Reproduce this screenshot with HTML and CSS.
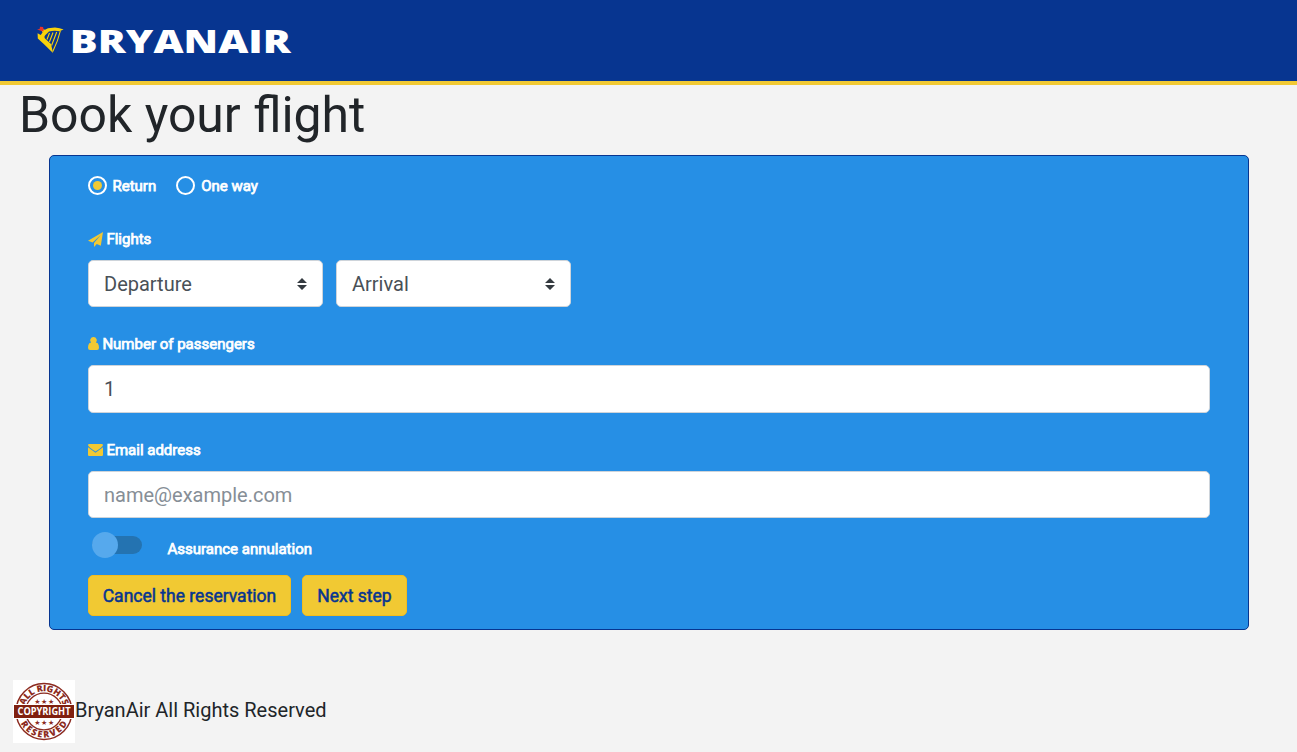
FILE: index.html
```html
<!DOCTYPE html>
<html lang="en">
<head>
<meta charset="utf-8">
<title>BryanAir</title>
<link rel="stylesheet" href="styles.css">
</head>
<body>
<header class="header">
  <svg class="logo" width="270" height="60" viewBox="36 12 270 60" role="img" aria-label="BRYANAIR">
    <path fill="#f8d20a" d="M40.5 28.5 45 29.8 48 28.3 55 27.5Q60 28.2 63.6 29.4L59.5 31.2Q54 30 49 31.6L46 34.5Q43.5 36.5 45 38.5L51 44 53 53 44.3 44.4 37.8 38.6 37.6 33.3 40.7 35 42.5 32.6Z"/>
    <path fill="none" stroke="#f8d20a" stroke-width="1.1" d="M60.3 31Q58 41 52.8 51.5M49.5 33 47 39.5M53 32.5 49.4 42M56.7 32 51.6 45.5"/>
    <path fill="#e8332b" d="M37 29.6 39.6 28.9 40 26.7 43 27 43.7 29.5 43.3 31.5 40 30.6Z"/>
    <text class="logo-text" x="69.8" y="53" textLength="221" lengthAdjust="spacingAndGlyphs">BRYANAIR</text>
  </svg>
</header>
<h1 class="title">Book your flight</h1>
<main class="panel">
  <div class="trip">
    <label class="radio"><span class="ring checked"></span><span class="label">Return</span></label>
    <label class="radio"><span class="ring"></span><span class="label">One way</span></label>
  </div>
  <div class="caption c-flights">
    <svg width="15" height="15" viewBox="0 0 15 15"><path fill="#f1c933" d="M15 0 12.8 13.7 8.8 12 6 15V10.9L12.8 3 4.6 10.4 0 8.7Z"/></svg>
    <span class="label">Flights</span>
  </div>
  <div class="selects">
    <div class="field select"><span>Departure</span><svg width="10" height="12" viewBox="0 0 10 12"><path fill="#343a40" d="M0 5 5 0 10 5ZM0 7H10L5 12Z"/></svg></div>
    <div class="field select"><span>Arrival</span><svg width="10" height="12" viewBox="0 0 10 12"><path fill="#343a40" d="M0 5 5 0 10 5ZM0 7H10L5 12Z"/></svg></div>
  </div>
  <div class="caption c-passengers">
    <svg width="11" height="13" viewBox="0 0 11 13"><path fill="#f1c933" d="M5.5 0A3.2 3.2 0 0 1 7.9 5.4Q10.2 5.4 10.7 8.2L11 10.8Q11 13 9 13H2Q0 13 0 10.8L.3 8.2Q.8 5.4 3.1 5.4A3.2 3.2 0 0 1 5.5 0Z"/></svg>
    <span class="label">Number of passengers</span>
  </div>
  <div class="field tall">1</div>
  <div class="caption c-email">
    <svg width="15" height="12" viewBox="0 0 15 12"><path fill="#f1c933" d="M0 1.2Q0 0 1.2 0H13.8Q15 0 15 1.2 14.5 2.8 7.5 7.6 .5 2.8 0 1.2ZM0 3.2 7.5 8.8 15 3.2V11Q15 12 13.8 12H1.2Q0 12 0 11Z"/></svg>
    <span class="label">Email address</span>
  </div>
  <div class="field placeholder">name@example.com</div>
  <div class="insurance"><span class="track"><span class="thumb"></span></span><span class="label">Assurance annulation</span></div>
  <div class="actions"><button class="btn cancel">Cancel the reservation</button><button class="btn next">Next step</button></div>
</main>
<footer class="footer">
  <svg width="62" height="63" viewBox="0 0 62 63">
    <defs><path id="up" d="M10.9 31.5A20.1 20.1 0 0 1 51.1 31.5"/><path id="down" d="M4.9 31.5A26.1 26.1 0 0 0 57.1 31.5"/></defs>
    <path fill="#fff" d="M0 0H62V63H0Z"/>
    <g fill="none" stroke="#8c2b20"><circle cx="31" cy="31.5" r="27.9" stroke-width="1.5"/><circle cx="31" cy="31.5" r="18.3" stroke-width="1.3"/></g>
    <g class="stamp-arc"><text><textPath href="#up" startOffset="50%" textLength="51">ALL RIGHTS</textPath></text><text><textPath href="#down" startOffset="50%" textLength="57">RESERVED</textPath></text></g>
    <text class="stars" x="31.5" y="24">★★★</text><text class="stars" x="31.5" y="45">★★★</text>
    <path fill="#fff" d="M1 24H61V39H1Z"/><path fill="#80200f" d="M1 25H61V38H1Z"/>
    <text class="stamp-text" x="31" y="35.2" textLength="53" lengthAdjust="spacingAndGlyphs">COPYRIGHT</text>
  </svg>
  <span>BryanAir All Rights Reserved</span>
</footer>
</body>
</html>
```

FILE: styles.css
```css
* { box-sizing: border-box; }
body { margin: 0; height: 752px; overflow: hidden; background: #f3f3f3; color: #212529; font-family: Roboto, sans-serif; font-size: 20px; }
svg { display: block; flex: none; }
.header { height: 85px; background: #073590; border-bottom: 4px solid #f1c933; padding: 12px 0 0 36px; }
.logo-text { font: 800 32.5px "Open Sans", sans-serif; fill: #fff; }
.title { margin: 0 0 10px 19px; height: 60px; font-size: 49.9px; font-weight: 400; line-height: 60px; white-space: nowrap; }
.panel { width: 1200px; height: 475px; margin-left: 49px; padding: 20px 38px 0; background: #268fe5; border: 1px solid #073590; border-radius: 5px; }
.label { color: #fff; font-size: 15px; line-height: 20px; white-space: nowrap; -webkit-text-stroke: .75px #fff; }
.trip { display: flex; height: 20px; gap: 19.5px; }
.radio { display: flex; align-items: flex-start; gap: 5.5px; }
.ring { display: flex; width: 19px; height: 19px; border: 2px solid #fff; border-radius: 50%; align-items: center; justify-content: center; }
.checked::after { content: ""; width: 9px; height: 9px; border-radius: 50%; background: #f1c933; }
.radio + .radio { gap: 6.5px; }
.caption { display: flex; align-items: center; height: 20px; gap: 3.4px; }
.c-flights { margin: 33px 0 11px; }
.c-passengers { margin: 27px 0 11px; }
.c-passengers svg { margin-top: -1px; }
.c-email { margin: 27px 0 11px; }
.field { height: 47px; padding: 0 15px; border: 1px solid #ced4da; border-radius: 5px; background: #fff; color: #495057; line-height: 46px; }
.tall { height: 48px; }
.placeholder { color: #868e96; }
.selects { display: flex; gap: 13px; }
.select { display: flex; width: 235px; align-items: center; justify-content: space-between; }
.insurance { display: flex; height: 26px; margin-top: 14px; padding-left: 4px; gap: 25.5px; }
.insurance .label { margin-top: 7px; }
.track { display: flex; align-items: center; width: 50px; height: 18px; margin-top: 4px; border-radius: 9px; background: #2473b1; }
.thumb { flex: none; width: 26px; height: 26px; border-radius: 50%; background: #56a9ed; }
.actions { display: flex; gap: 11px; margin-top: 17px; }
.btn { height: 41px; padding: 0; border: 1px solid #f3bd1d; border-radius: 5px; background: #f1c933; color: #073590; font: 400 17.5px Roboto, sans-serif; -webkit-text-stroke: .5px #073590; white-space: nowrap; }
.cancel { width: 203px; }
.next { width: 105px; }
.footer { display: flex; height: 63px; margin: 50px 0 0 13px; line-height: 60px; }
.stamp-arc { fill: #8c2b20; font: 800 9px "Open Sans", sans-serif; text-anchor: middle; }
.stamp-text { fill: #fff; font: 700 10.5px "Open Sans", sans-serif; text-anchor: middle; }
.stars { fill: #8c2b20; font: 7px "DejaVu Sans", sans-serif; text-anchor: middle; letter-spacing: .5px; }
```
